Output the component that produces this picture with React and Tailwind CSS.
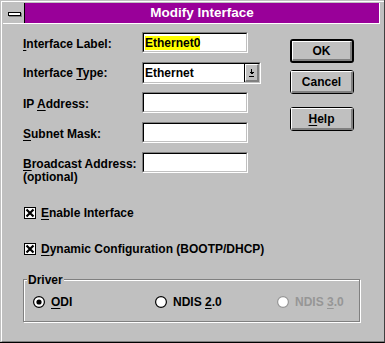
import React from 'react';

const U = ({ children }) => <span className="underline underline-offset-[2px] decoration-1">{children}</span>;

const Sunken = ({ className = '', children }) => (
    <div className={`border border-t-[#808080] border-l-[#808080] border-b-white border-r-white ${className}`}>
        <div className="h-full border border-t-black border-l-black border-b-[#c0c0c0] border-r-[#c0c0c0] bg-white flex items-center">
            {children}
        </div>
    </div>
);

const Button = ({ children, isDefault }) => (
    <div className={`h-[24px] w-[64px] rounded-[3px] border-black bg-[#c0c0c0] ${isDefault ? 'border-2' : 'border'}`}>
        <div className="h-full flex items-center justify-center border-t border-l border-white border-b-2 border-r-2 border-b-[#808080] border-r-[#808080]">
            {children}
        </div>
    </div>
);

const CheckBox = ({ children }) => (
    <div className="flex items-center h-[14px] gap-[5px] pl-px">
        <svg width="12" height="12" viewBox="0 0 12 12" shapeRendering="crispEdges">
            <rect x="0.5" y="0.5" width="11" height="11" fill="#fff" stroke="#000" />
            <path d="M2.5 2.5 L9.5 9.5 M9.5 2.5 L2.5 9.5" stroke="#000" strokeWidth="2.2" shapeRendering="auto" />
        </svg>
        <span>{children}</span>
    </div>
);

const Radio = ({ checked, disabled, children }) => (
    <div className={`shrink-0 flex items-center h-[14px] gap-[6px] w-[122px] ${disabled ? 'text-[#969696]' : ''}`}>
        <svg width="12" height="12" viewBox="0 0 12 12">
            <circle cx="6" cy="6" r="5.4" fill="#fff" stroke={disabled ? '#969696' : '#000'} strokeWidth="1.2" />
            {checked && <circle cx="6" cy="6" r="2.6" fill="#000" />}
        </svg>
        <span>{children}</span>
    </div>
);

const Row = ({ label, pt = 'pt-[5px]', children }) => (
    <div className="flex h-[30px]">
        <div className={`w-[119px] ${pt}`}>{label}</div>
        {children}
    </div>
);

export default function App() {
    return (
        <div className="w-[385px] h-[343px] bg-[#c0c0c0] pt-px pl-px border-r border-b border-r-[#404040] border-b-black font-['Liberation_Sans',Arial,sans-serif] font-bold text-[12px] leading-[14px] text-black">
            <div className="h-full border-t border-l border-b border-t-white border-l-white border-b-[#808080]">
                {/* title bar */}
                <div className="mt-px ml-px w-[377px] h-[21px] flex border-b border-r border-white">
                    <div className="w-[22px] h-full border-r border-black pl-[5px] pt-[9px]">
                        <div className="w-[13px] h-[4px] border border-black bg-white shadow-[1px_1px_0_#808080]" />
                    </div>
                    <div className="flex-1 bg-[#990099] flex items-center justify-center text-white text-[13.5px] leading-[16px]">
                        Modify Interface
                    </div>
                </div>

                <div className="pl-[21px]">
                    <div className="flex">
                        <div className="w-[267px] pt-[8px]">
                            <Row label={<><U>I</U>nterface Label:</>}>
                                <Sunken className="w-[106px] h-[21px]">
                                    <span className="ml-px bg-[#ffff00]">Ethernet0</span>
                                </Sunken>
                            </Row>
                            <Row label={<>Interface <U>T</U>ype:</>} pt="pt-[4px]">
                                <Sunken className="w-[119px] h-[22px]">
                                    <span className="flex-1 pl-px">Ethernet</span>
                                    <div className="w-[15px] h-full border-l border-black">
                                        <div className="h-full flex items-center justify-center border-t border-l border-white border-b-2 border-r-2 border-b-[#808080] border-r-[#808080] bg-[#c0c0c0]">
                                            <svg width="5" height="8" viewBox="0 0 5 8" shapeRendering="crispEdges">
                                                <rect x="2" y="0" width="1" height="3" fill="#000" />
                                                <path d="M0 3 H5 L2.5 5.5 Z" fill="#000" />
                                                <rect x="0" y="7" width="5" height="1" fill="#000" />
                                            </svg>
                                        </div>
                                    </div>
                                </Sunken>
                            </Row>
                            <Row label={<>IP <U>A</U>ddress:</>}>
                                <Sunken className="w-[106px] h-[21px]" />
                            </Row>
                            <Row label={<><U>S</U>ubnet Mask:</>}>
                                <Sunken className="w-[106px] h-[21px]" />
                            </Row>
                            <Row label={<><U>B</U>roadcast Address:<br />(optional)</>} pt="pt-[6px] leading-[13px]">
                                <Sunken className="w-[106px] h-[21px]" />
                            </Row>
                        </div>
                        <div className="w-[64px] pt-[15px] flex flex-col">
                            <Button isDefault>OK</Button>
                            <div className="mt-[7px]">
                                <Button>Cancel</Button>
                            </div>
                            <div className="mt-[13px]">
                                <Button><span><U>H</U>elp</span></Button>
                            </div>
                        </div>
                    </div>

                    <div className="mt-[24px]">
                        <CheckBox><U>E</U>nable Interface</CheckBox>
                    </div>
                    <div className="mt-[22px]">
                        <CheckBox><U>D</U>ynamic Configuration (BOOTP/DHCP)</CheckBox>
                    </div>

                    <div className="relative mt-[23px] w-[337px] h-[43px] border border-[#808080] shadow-[1px_1px_0_#fff,inset_1px_1px_0_#fff]">
                        <span className="absolute left-[3px] -top-[7px] px-px bg-[#c0c0c0]">Driver</span>
                        <div className="flex pt-[15px] pl-[9px]">
                            <Radio checked><U>O</U>DI</Radio>
                            <Radio>NDIS <U>2</U>.0</Radio>
                            <Radio disabled>NDIS <U>3</U>.0</Radio>
                        </div>
                    </div>
                </div>
            </div>
        </div>
    );
}
